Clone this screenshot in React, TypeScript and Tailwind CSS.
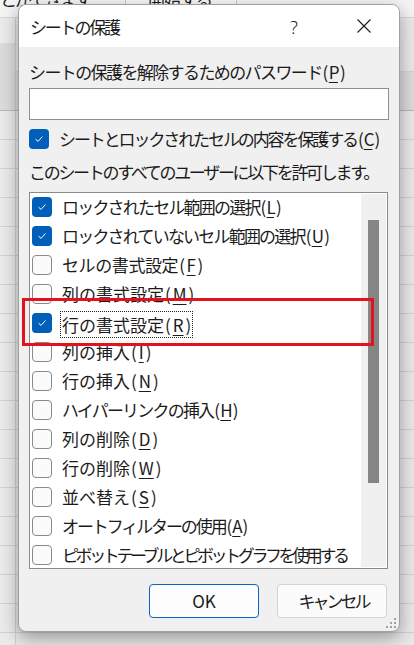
import React from "react";

type Item = { label: string; k: string | null; checked?: boolean; focus?: boolean; t?: string };

const items: Item[] = [
  { label: "ロックされたセル範囲の選択", k: "L", checked: true, t: "tracking-[-1.8px]" },
  { label: "ロックされていないセル範囲の選択", k: "U", checked: true, t: "tracking-[-1.8px]" },
  { label: "セルの書式設定", k: "F", t: "tracking-[-0.4px]" },
  { label: "列の書式設定", k: "M" },
  { label: "行の書式設定", k: "R", checked: true, focus: true },
  { label: "列の挿入", k: "I" },
  { label: "行の挿入", k: "N" },
  { label: "ハイパーリンクの挿入", k: "H", t: "tracking-[-1.8px]" },
  { label: "列の削除", k: "D" },
  { label: "行の削除", k: "W" },
  { label: "並べ替え", k: "S" },
  { label: "オートフィルターの使用", k: "A", t: "tracking-[-2.1px]" },
  { label: "ピボットテーブルとピボットグラフを使用する", k: null, t: "tracking-[-3.4px]" },
];

function Box({ checked }: { checked?: boolean }) {
  if (checked) {
    return (
      <div className="w-[20px] h-[20px] shrink-0 rounded-[4px] bg-[#005fb8] flex items-center justify-center">
        <svg width="20" height="20" viewBox="0 0 20 20">
          <path d="M6.8 10.4 L9 12.4 L13.2 7.8" fill="none" stroke="white" strokeWidth="1" strokeLinecap="round" strokeLinejoin="round" />
        </svg>
      </div>
    );
  }
  return <div className="w-[20px] h-[20px] shrink-0 rounded-[4px] border border-[#8a8a8a] bg-[#fbfbfb]" />;
}

function Label({ label, k }: { label: string; k: string | null }) {
  return (
    <>
      {label}
      {k && (
        <>
          <span className="ml-[1px] mr-[1px]">(</span>
          <span className="underline underline-offset-[3px] decoration-[1px] mx-[1px]">{k}</span>
          <span className="ml-[1px]">)</span>
        </>
      )}
    </>
  );
}

export default function App() {
  const bgRows = Array.from({ length: 19 });
  return (
    <div className="relative w-[414px] h-[645px] overflow-hidden bg-[#e8e8e8] font-['Noto_Sans_CJK_JP','Noto_Sans',sans-serif] text-[#1b1b1b]">
      {/* Background spreadsheet */}
      <div className="flex flex-col">
        <div className="h-[18px] flex bg-[#f4f4f4] border-b border-[#d6d6d6] overflow-hidden">
          <div className="w-[125px] text-[17px] leading-[17px] -mt-[10px] tracking-[-2px] whitespace-nowrap">とができます</div>
          <div className="w-[112px] border-x border-[#c8c8c8] bg-[#f7f7f7] text-[17px] leading-[17px] -mt-[10px] pl-[22px] tracking-[-1px] whitespace-nowrap">開始する</div>
          <div className="flex-1" />
        </div>
        <div className="h-[25px] flex">
          <div className="w-[16px] border-r border-[#d0d0d0] bg-[#ececec]" />
          <div className="flex-1 bg-[#eaeaea]" />
        </div>
        <div className="h-[29px] flex">
          <div className="w-[16px] border-r border-[#d0d0d0] bg-[#dcdcdc]" />
          <div className="flex-1 bg-[#e9e9e9] border-b border-[#d4d4d4]" />
        </div>
        <div className="h-[39px] flex bg-[#dcdcdc] border-b border-[#b9b9b9]">
          <div className="w-[16px] border-r border-[#cdcdcd]" />
        </div>
        {bgRows.map((_, i) => (
          <div key={i} className="h-[29px] flex border-b border-[#d2d2d2] bg-[#e9e9e9]">
            <div className="w-[16px] border-r border-[#d0d0d0] bg-[#ebebeb]" />
          </div>
        ))}
      </div>

      {/* Dialog */}
      <div className="absolute left-[18px] top-[4px] w-[382px] h-[628px] rounded-[8px] border border-[#a0a0a0] bg-[#f0f0f0] overflow-hidden shadow-[0_6px_18px_rgba(0,0,0,0.35)] flex flex-col">
        <div className="h-[42px] bg-white flex items-center shrink-0">
          <div className="flex-1 pl-[11px] text-[17px] leading-[20px] pt-[2px] tracking-[-2.2px]">シートの保護</div>
          <div className="w-[46px] flex justify-center text-[18px] leading-[20px] font-['Noto_Sans',sans-serif] font-light pt-[1px]">?</div>
          <div className="w-[24px]" />
          <div className="w-[46px] flex justify-center">
            <svg width="16" height="16" viewBox="0 0 16 16">
              <path d="M1.5 1.5 L14.5 14.5 M14.5 1.5 L1.5 14.5" stroke="#1b1b1b" strokeWidth="1.1" fill="none" />
            </svg>
          </div>
          <div className="w-[12px]" />
        </div>

        <div className="flex flex-col pl-[10px] relative flex-1">
          <div className="mt-[14px] h-[22px] leading-[22px] text-[17px] tracking-[-1.6px] whitespace-nowrap">
            <Label label="シートの保護を解除するためのパスワード" k="P" />
          </div>
          <div className="mt-[5px] h-[32px] w-[360px] bg-white border border-[#8f8f8f]" />
          <div className="mt-[9px] h-[20px] flex items-center">
            <Box checked />
            <div className="ml-[10px] text-[17px] leading-[22px] tracking-[-2.1px] whitespace-nowrap">
              <Label label="シートとロックされたセルの内容を保護する" k="C" />
            </div>
          </div>
          <div className="mt-[12px] h-[22px] leading-[22px] text-[17px] tracking-[-2.3px] whitespace-nowrap">
            このシートのすべてのユーザーに以下を許可します。
          </div>

          <div className="mt-[9px] h-[377px] w-[359px] bg-white border border-[#8a8a8a] flex overflow-hidden">
            <div className="flex-1 flex flex-col -mt-[1px] min-w-0">
              {items.map((it, i) => (
                <div key={i} className="h-[29px] shrink-0 flex items-center pl-[2px]">
                  <Box checked={it.checked} />
                  {it.focus ? (
                    <div className="ml-[8px] mt-[4px] h-[27px] px-[1px] border border-dotted border-[#222] text-[17px] leading-[25px] whitespace-nowrap">
                      <Label label={it.label} k={it.k} />
                    </div>
                  ) : (
                    <div className={`ml-[10px] text-[17px] leading-[22px] whitespace-nowrap ${it.t ?? ""}`}>
                      <Label label={it.label} k={it.k} />
                    </div>
                  )}
                </div>
              ))}
            </div>
            <div className="w-[25px] shrink-0 mr-[1px] my-[1px] bg-[#f0f0f0] flex justify-center">
              <div className="w-[11px] h-[263px] mt-[26px] bg-[#858585]" />
            </div>
          </div>

          <div className="mt-[15px] w-[358px] flex justify-end gap-[18px]">
            <div className="w-[110px] h-[34px] rounded-[4px] border border-[#0a64c0] bg-[#fdfdfd] flex items-center justify-center text-[17px]">
              OK
            </div>
            <div className="w-[110px] h-[34px] rounded-[4px] border border-[#d3d3d3] bg-[#fbfbfb] flex items-center justify-center text-[17px] tracking-[-3px] pl-[3px]">
              キャンセル
            </div>
          </div>

          <svg className="absolute right-[2px] bottom-[2px]" width="12" height="12" viewBox="0 0 12 12">
            <rect x="9" y="1" width="2" height="2" fill="#a0a0a0" />
            <rect x="5" y="5" width="2" height="2" fill="#a0a0a0" />
            <rect x="9" y="5" width="2" height="2" fill="#a0a0a0" />
            <rect x="1" y="9" width="2" height="2" fill="#a0a0a0" />
            <rect x="5" y="9" width="2" height="2" fill="#a0a0a0" />
            <rect x="9" y="9" width="2" height="2" fill="#a0a0a0" />
          </svg>
        </div>
      </div>

      {/* Red annotation box */}
      <div className="absolute left-[22px] top-[298px] w-[352px] h-[48px] border-[3px] border-[#e3131e]" />
    </div>
  );
}
